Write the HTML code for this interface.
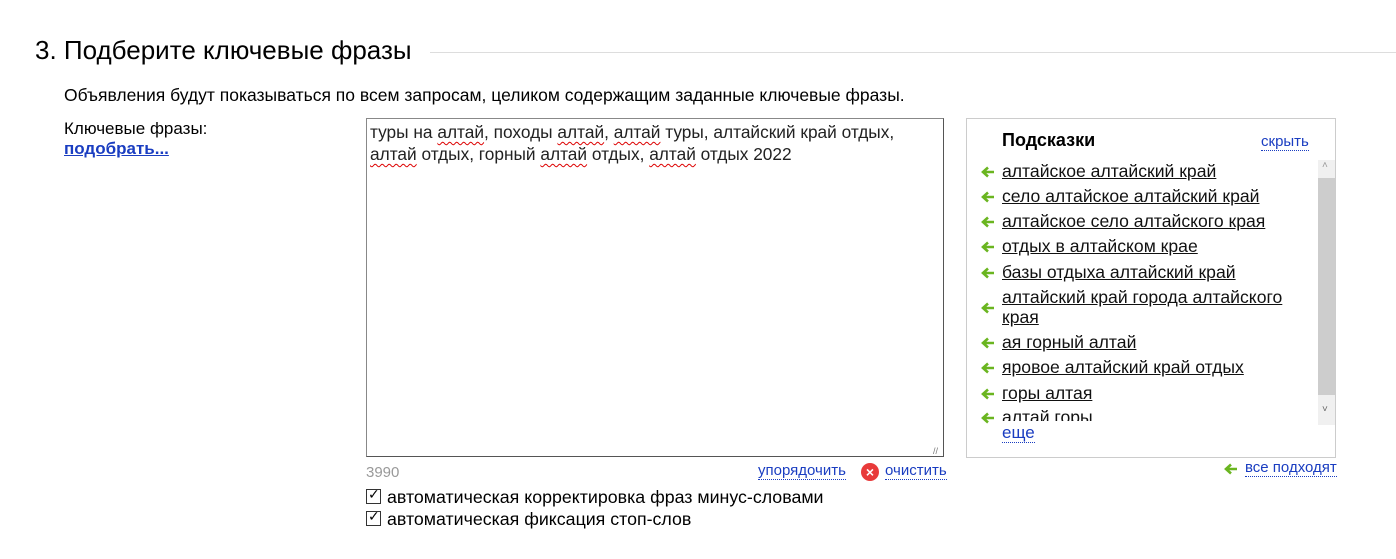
<!DOCTYPE html>
<html><head><meta charset="utf-8"><style>
body{margin:0;width:1396px;height:559px;background:#fff;font-family:"Liberation Sans","DejaVu Sans",sans-serif;color:#000;position:relative;overflow:hidden}
.a{position:absolute;white-space:nowrap}
.title{left:35px;top:35px;font-size:26px}
.hr{left:430px;top:52px;width:966px;height:1px;background:#ddd}
.desc{left:64px;top:85px;font-size:17.5px}
.lbl{left:64px;top:119px;font-size:17px;line-height:20px}
.lbl b{color:#1a3dc1;text-decoration:underline}
.ta{left:366px;top:118px;width:576px;height:337px;border:1px solid #888;border-bottom-color:#555;border-right-color:#555}
.tt{left:370px;top:121px;font-size:17.3px;line-height:22px;color:#222}
.sp{text-decoration:underline wavy #d00;text-decoration-thickness:1px;text-underline-offset:3px}
.sug{left:966px;top:118px;width:368px;height:338px;border:1px solid #ccc}
.sb{left:1318px;top:160px;width:17px;height:265px;background:#f0f0f0}
.sbt{left:1318px;top:178px;width:17px;height:217px;background:#cdcdcd}
.it{left:1002px;font-size:17.6px;line-height:20px;color:#111}
.it span{text-decoration:underline}
.ar{position:absolute;left:981px;width:14px;height:12px}
.blue{color:#1a3dc1;border-bottom:1px dotted #1a3dc1}
.cb{width:13px;height:13px;border:1px solid #333;display:inline-block;position:relative;vertical-align:-1px;margin-right:6px}
</style></head><body>
<svg width="0" height="0" style="position:absolute"><defs><symbol id="arr" viewBox="0 0 14 12"><path d="M13 6H3M7 1.5L2 6l5 4.5" fill="none" stroke="#6ab520" stroke-width="2.6"/></symbol></defs></svg>
<div class="a title">3. Подберите ключевые фразы</div>
<div class="a hr"></div>
<div class="a desc">Объявления будут показываться по всем запросам, целиком содержащим заданные ключевые фразы.</div>
<div class="a lbl">Ключевые фразы:<br><b>подобрать...</b></div>
<div class="a ta"></div>
<div class="a tt">туры на <span class="sp">алтай</span>, походы <span class="sp">алтай</span>, <span class="sp">алтай</span> туры, алтайский край отдых,<br><span class="sp">алтай</span> отдых, горный <span class="sp">алтай</span> отдых, <span class="sp">алтай</span> отдых 2022</div>
<div class="a" style="left:933px;top:446px;font-size:9px;color:#777">//</div>
<div class="a" style="left:366px;top:464px;font-size:15px;color:#999">3990</div>
<div class="a" style="left:758px;top:462px;font-size:15px"><span class="blue">упорядочить</span></div>
<div class="a" style="left:861px;top:463px;width:18px;height:18px;border-radius:50%;background:#e83a3a;color:#fff;font-size:14px;line-height:18px;text-align:center;font-weight:bold">×</div>
<div class="a" style="left:885px;top:462px;font-size:15px"><span class="blue">очистить</span></div>
<div class="a" style="left:366px;top:487px;font-size:17.8px"><span class="cb"><span style="position:absolute;left:1px;top:-4px;font-size:14px">✓</span></span>автоматическая корректировка фраз минус-словами</div>
<div class="a" style="left:366px;top:509px;font-size:17.8px"><span class="cb"><span style="position:absolute;left:1px;top:-4px;font-size:14px">✓</span></span>автоматическая фиксация стоп-слов</div>
<div class="a sug"></div>
<div class="a" style="left:1002px;top:130px;font-size:18px;font-weight:bold">Подсказки</div>
<div class="a" style="left:1261px;top:133px;font-size:15px"><span class="blue">скрыть</span></div>
<div class="a sb"></div><div class="a sbt"></div>
<div class="a" style="left:1322px;top:160px;font-size:10px;color:#999">˄</div>
<div class="a" style="left:1322px;top:404px;font-size:10px;color:#666">˅</div>
<div class="a it" style="top:161px"><span>алтайское алтайский край</span></div>
<div class="a it" style="top:186px"><span>село алтайское алтайский край</span></div>
<div class="a it" style="top:211px"><span>алтайское село алтайского края</span></div>
<div class="a it" style="top:236px"><span>отдых в алтайском крае</span></div>
<div class="a it" style="top:262px"><span>базы отдыха алтайский край</span></div>
<div class="a it" style="top:287px"><span>алтайский край города алтайского</span><br><span>края</span></div>
<div class="a it" style="top:332px"><span>ая горный алтай</span></div>
<div class="a it" style="top:357px"><span>яровое алтайский край отдых</span></div>
<div class="a it" style="top:383px"><span>горы алтая</span></div>
<div class="a" style="left:1000px;top:407px;width:300px;height:14px;overflow:hidden"><div class="it" style="position:absolute;left:2px;top:0">алтай горы</div></div>
<svg class="ar" style="top:166px"><use href="#arr"/></svg>
<svg class="ar" style="top:191px"><use href="#arr"/></svg>
<svg class="ar" style="top:216px"><use href="#arr"/></svg>
<svg class="ar" style="top:241px"><use href="#arr"/></svg>
<svg class="ar" style="top:267px"><use href="#arr"/></svg>
<svg class="ar" style="top:302px"><use href="#arr"/></svg>
<svg class="ar" style="top:337px"><use href="#arr"/></svg>
<svg class="ar" style="top:362px"><use href="#arr"/></svg>
<svg class="ar" style="top:388px"><use href="#arr"/></svg>
<svg class="ar" style="top:412px"><use href="#arr"/></svg>
<div class="a" style="left:1002px;top:423px;font-size:17px"><span class="blue">еще</span></div>
<svg class="ar" style="left:1224px;top:463px"><use href="#arr"/></svg>
<div class="a" style="left:1245px;top:459px;font-size:15px"><span class="blue">все подходят</span></div>
</body></html>
